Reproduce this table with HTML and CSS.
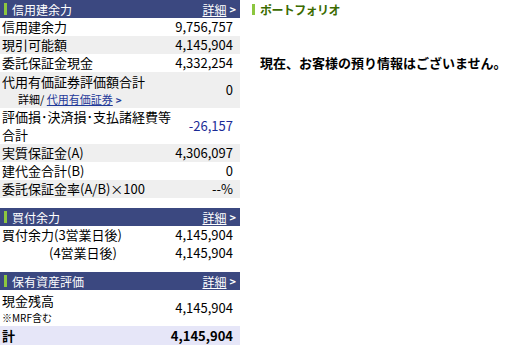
FILE: index.html
```html
<!DOCTYPE html>
<html lang="ja">
<head>
<meta charset="utf-8">
<link rel="stylesheet" href="styles.css">
</head>
<body>
<div class="page">
  <div class="left">
    <section class="box">
      <div class="head"><span class="title"><i class="mark"></i>信用建余力</span><a class="more">詳細</a><span class="arr">&gt;</span></div>
      <div class="row"><span>信用建余力</span><span>9,756,757</span></div>
      <div class="row alt"><span>現引可能額</span><span>4,145,904</span></div>
      <div class="row"><span>委託保証金現金</span><span>4,332,254</span></div>
      <div class="row alt tall"><span class="lab">代用有価証券評価額合計<span class="sub">詳細/ <a class="link">代用有価証券</a><b class="larr">&gt;</b></span></span><span class="val low">0</span></div>
      <div class="row tall"><span class="lab">評価損･決済損･支払諸経費等<br>合計</span><span class="neg">-26,157</span></div>
      <div class="row alt"><span>実質保証金(A)</span><span>4,306,097</span></div>
      <div class="row"><span>建代金合計(B)</span><span>0</span></div>
      <div class="row alt"><span>委託保証金率(A/B)×100</span><span>--%</span></div>
    </section>
    <section class="box">
      <div class="head"><span class="title"><i class="mark"></i>買付余力</span><a class="more">詳細</a><span class="arr">&gt;</span></div>
      <div class="row"><span>買付余力(3営業日後)</span><span>4,145,904</span></div>
      <div class="row"><span class="ind">(4営業日後)</span><span>4,145,904</span></div>
    </section>
    <section class="box">
      <div class="head"><span class="title"><i class="mark"></i>保有資産評価</span><a class="more">詳細</a><span class="arr">&gt;</span></div>
      <div class="row tall"><span class="lab">現金残高<span class="note">※MRF含む</span></span><span>4,145,904</span></div>
      <div class="row total"><span>計</span><span>4,145,904</span></div>
    </section>
  </div>
  <div class="right">
    <div class="pf"><i class="pmark"></i>ポートフォリオ</div>
    <p class="msg">現在、お客様の預り情報はございません。</p>
  </div>
</div>
</body>
</html>
```
FILE: styles.css
```css
html, body { margin: 0; padding: 0; background: #fff; }
body { font-family: "Noto Sans CJK JP", "DejaVu Sans", sans-serif; font-size: 13px; color: #000; }
.page { display: flex; align-items: flex-start; }
.left { width: 240px; display: flex; flex-direction: column; gap: 10px; }
.head { display: flex; align-items: center; height: 18px; background: #3b4880; color: #fff; padding: 0 4px 0 4px; }
.title { flex: 1; display: flex; align-items: center; font-size: 12px; line-height: 17px; }
.mark { display: inline-block; width: 3px; height: 12px; background: #8cc63f; margin-right: 5px; }
.more { color: #fff; text-decoration: underline; font-size: 12px; line-height: 17px; }
.arr { font-weight: bold; font-size: 11px; margin-left: 3px; line-height: 17px; }
.row { display: flex; justify-content: space-between; align-items: center; height: 18px; line-height: 18px; padding: 0 7px 0 2px; }
.row.alt { background: #efefef; }
.row.tall { height: 36px; }
.lab { display: flex; flex-direction: column; line-height: 18px; }
.sub { font-size: 11px; padding-left: 16px; line-height: 16px; }
.link { color: #1f3a99; text-decoration: underline; }
.larr { color: #1f3a99; font-size: 10px; margin-left: 3px; }
.neg { color: #1a2b96; }
.note { font-size: 10px; line-height: 15px; }
.ind { padding-left: 47px; }
.row.total { background: #e6e6f8; font-weight: bold; height: 19px; }
.right { padding-left: 12px; flex: 1; }
.pf { display: flex; align-items: center; color: #3b6b00; font-weight: bold; font-size: 12px; letter-spacing: -0.6px; margin-top: 1px; }
.pmark { display: inline-block; width: 3px; height: 11px; background: #8cc63f; margin-right: 5px; }
.msg { font-weight: bold; font-size: 13px; margin: 35px 0 0 8px; }
```
